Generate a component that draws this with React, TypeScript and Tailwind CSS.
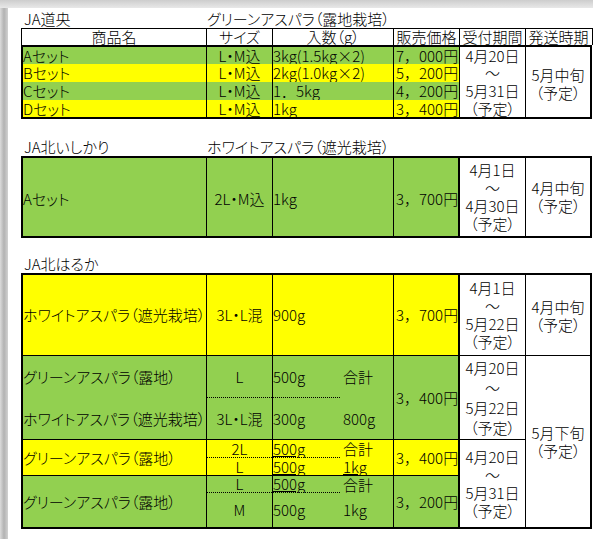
import React from "react";

const G = "bg-[#92d050]";
const Y = "bg-[#ffff00]";

type P = { cls?: string; children?: React.ReactNode };

function W({ children }: { children: React.ReactNode }) {
  return <span className="[font-feature-settings:normal]">{children}</span>;
}

function Cell({ cls = "", children }: P) {
  return <div className={`flex items-center whitespace-nowrap min-w-0 leading-[16px] ${cls}`}>{children}</div>;
}

function Lines({ items, h }: { items: React.ReactNode[]; h: string }) {
  return (
    <div className="flex flex-col items-center">
      {items.map((t, i) => (
        <div key={i} className={`${h} flex items-center justify-center leading-[16px] whitespace-nowrap`}>
          {t}
        </div>
      ))}
    </div>
  );
}

function Title({ a, b }: { a: string; b: string }) {
  return (
    <div className="flex h-[20px] items-end leading-[18px]">
      <div className="w-[186px] pl-[3px]">{a}</div>
      <div>{b}</div>
    </div>
  );
}

function SizeCell({ cls, text, dotted }: { cls: string; text: string; dotted?: boolean }) {
  return (
    <div className={`flex flex-col border-r border-black leading-[16px] ${cls}`}>
      <div className="flex-1 flex items-center justify-center">{text}</div>
      {dotted && <div className="border-b border-dotted border-black" />}
    </div>
  );
}

function QtyCell({
  cls,
  a,
  b,
  dotted,
  ua,
  ub,
}: {
  cls: string;
  a: React.ReactNode;
  b?: React.ReactNode;
  dotted?: boolean;
  ua?: boolean;
  ub?: boolean;
}) {
  return (
    <div className={`flex border-r border-black whitespace-nowrap leading-[16px] ${cls}`}>
      <div className="w-[67px] flex flex-col">
        <div className="flex-1 flex items-center">
          <span className={ua ? "underline underline-offset-[1px]" : ""}>{a}</span>
        </div>
        {dotted && <div className="border-b border-dotted border-black" />}
      </div>
      <div className="flex-1 flex items-center pl-[3px]">
        <span className={ub ? "underline underline-offset-[1px]" : ""}>{b}</span>
      </div>
    </div>
  );
}

function Price({ a, b }: { a: string; b: string }) {
  return (
    <>
      {a}
      <W>，</W>
      {b}円
    </>
  );
}

export default function App() {
  return (
    <div className="w-[593px] h-[539px] bg-white flex flex-col overflow-hidden text-[15px] font-light leading-[18px] text-black font-['Noto_Sans_CJK_JP',sans-serif] [font-feature-settings:'palt']">
      <div className="h-[8px] shrink-0 bg-gradient-to-b from-[#cdcdcd] to-[#e8e8e8]" />
      <div className="flex flex-1">
        <div className="w-[8px] shrink-0 bg-gradient-to-r from-[#dcdcdc] via-[#b2b2b2] to-[#d2d2d2]" />
        <div className="flex-1 pl-[13px] flex flex-col">
          {/* Table 1 */}
          <Title a="JA道央" b="グリーンアスパラ（露地栽培）" />
          <div className="grid grid-cols-[185px_66px_121px_66px_66px_65px] h-[17px] border-t border-l border-r border-black leading-[16px]">
            <div className="border-r border-black text-center">商品名</div>
            <div className="border-r border-black text-center">サイズ</div>
            <div className="border-r border-black text-center">入数（g）</div>
            <div className="border-r border-black text-center whitespace-nowrap">販売価格</div>
            <div className="border-r border-black text-center whitespace-nowrap">受付期間</div>
            <div className="text-center whitespace-nowrap">発送時期</div>
          </div>
          <div className="grid grid-cols-[184px_66px_121px_66px_66px_64px] grid-rows-[17px_18px_18px_17px] border-2 border-black w-[571px]">
            <Cell cls={`${G} border-r border-black`}>Aセット</Cell>
            <Cell cls={`${G} border-r border-black justify-center`}>L・M込</Cell>
            <Cell cls={`${G} border-r border-black`}>3kg(1.5kg×2)</Cell>
            <Cell cls={`${G} border-r border-black pl-[2px]`}>
              <Price a="7" b="000" />
            </Cell>
            <div className="row-span-4 border-r border-black bg-white flex flex-col items-center leading-[16px]">
              <div className="h-[17px] flex items-center">4月20日</div>
              <div className="h-[18px] flex items-center">～</div>
              <div className="h-[18px] flex items-center">5月31日</div>
              <div className="h-[17px] flex items-center">（予定）</div>
            </div>
            <div className="row-span-4 bg-white flex items-center justify-center pt-[3px]">
              <Lines items={["5月中旬", "（予定）"]} h="h-[18px]" />
            </div>

            <Cell cls={`${Y} border-r border-black`}>Bセット</Cell>
            <Cell cls={`${Y} border-r border-black justify-center`}>L・M込</Cell>
            <Cell cls={`${Y} border-r border-black`}>2kg(1.0kg×2)</Cell>
            <Cell cls={`${Y} border-r border-black pl-[2px]`}>
              <Price a="5" b="200" />
            </Cell>

            <Cell cls={`${G} border-r border-black`}>Cセット</Cell>
            <Cell cls={`${G} border-r border-black justify-center`}>L・M込</Cell>
            <Cell cls={`${G} border-r border-black`}>
              1<W>．</W>5kg
            </Cell>
            <Cell cls={`${G} border-r border-black pl-[2px]`}>
              <Price a="4" b="200" />
            </Cell>

            <Cell cls={`${Y} border-r border-black`}>Dセット</Cell>
            <Cell cls={`${Y} border-r border-black justify-center`}>L・M込</Cell>
            <Cell cls={`${Y} border-r border-black`}>1kg</Cell>
            <Cell cls={`${Y} border-r border-black pl-[2px]`}>
              <Price a="3" b="400" />
            </Cell>
          </div>

          {/* Table 2 */}
          <div className="h-[17px] shrink-0" />
          <Title a="JA北いしかり" b="ホワイトアスパラ（遮光栽培）" />
          <div className="grid grid-cols-[184px_66px_121px_66px_66px_64px] h-[82px] border-2 border-black w-[571px]">
            <Cell cls={`${G} border-r border-black pt-[3px]`}>Aセット</Cell>
            <Cell cls={`${G} border-r border-black justify-center pt-[3px]`}>2L・M込</Cell>
            <Cell cls={`${G} border-r border-black pt-[3px]`}>1kg</Cell>
            <Cell cls={`${G} border-r-2 border-black pl-[2px] pt-[3px]`}>
              <Price a="3" b="700" />
            </Cell>
            <div className="border-r border-black bg-white flex items-center justify-center">
              <Lines items={["4月1日", "～", "4月30日", "（予定）"]} h="h-[18px]" />
            </div>
            <div className="bg-white flex items-center justify-center">
              <Lines items={["4月中旬", "（予定）"]} h="h-[18px]" />
            </div>
          </div>

          {/* Table 3 */}
          <div className="h-[15px] shrink-0" />
          <Title a="JA北はるか" b="" />
          <div className="grid grid-cols-[184px_66px_121px_66px_66px_64px] grid-rows-[81px_42px_42px_18px_18px_17px_34px] border-2 border-black w-[571px]">
            {/* col 1 */}
            <Cell cls={`${Y} col-start-1 row-start-1 border-r border-b border-black`}>ホワイトアスパラ（遮光栽培）</Cell>
            <Cell cls={`${G} col-start-1 row-start-2 border-r border-black`}>グリーンアスパラ（露地）</Cell>
            <Cell cls={`${G} col-start-1 row-start-3 border-r border-b border-black`}>ホワイトアスパラ（遮光栽培）</Cell>
            <Cell cls={`${Y} col-start-1 row-start-4 row-span-2 border-r border-b border-black`}>グリーンアスパラ（露地）</Cell>
            <Cell cls={`${G} col-start-1 row-start-6 row-span-2 border-r border-black`}>グリーンアスパラ（露地）</Cell>

            {/* col 2 */}
            <SizeCell cls={`${Y} col-start-2 row-start-1 border-b`} text="3L・L混" />
            <SizeCell cls={`${G} col-start-2 row-start-2`} text="L" dotted />
            <SizeCell cls={`${G} col-start-2 row-start-3 border-b`} text="3L・L混" />
            <SizeCell cls={`${Y} col-start-2 row-start-4`} text="2L" dotted />
            <SizeCell cls={`${Y} col-start-2 row-start-5 border-b`} text="L" />
            <SizeCell cls={`${G} col-start-2 row-start-6`} text="L" dotted />
            <SizeCell cls={`${G} col-start-2 row-start-7`} text="M" />

            {/* col 3 */}
            <QtyCell cls={`${Y} col-start-3 row-start-1 border-b`} a="900g" />
            <QtyCell cls={`${G} col-start-3 row-start-2`} a="500g" b="合計" dotted />
            <QtyCell cls={`${G} col-start-3 row-start-3 border-b`} a="300g" b="800g" />
            <QtyCell cls={`${Y} col-start-3 row-start-4`} a="500g" b="合計" dotted ua />
            <QtyCell cls={`${Y} col-start-3 row-start-5 border-b`} a="500g" b="1kg" ua ub />
            <QtyCell cls={`${G} col-start-3 row-start-6`} a="500g" b="合計" dotted ua />
            <QtyCell cls={`${G} col-start-3 row-start-7`} a="500g" b="1kg" />

            {/* col 4 */}
            <Cell cls={`${Y} col-start-4 row-start-1 border-r-2 border-b border-black pl-[2px]`}>
              <Price a="3" b="700" />
            </Cell>
            <Cell cls={`${G} col-start-4 row-start-2 row-span-2 border-r-2 border-b border-black pl-[2px]`}>
              <Price a="3" b="400" />
            </Cell>
            <Cell cls={`${Y} col-start-4 row-start-4 row-span-2 border-r-2 border-b border-black pl-[2px]`}>
              <Price a="3" b="400" />
            </Cell>
            <Cell cls={`${G} col-start-4 row-start-6 row-span-2 border-r-2 border-black pl-[2px]`}>
              <Price a="3" b="200" />
            </Cell>

            {/* col 5 */}
            <div className="col-start-5 row-start-1 border-r border-b border-black bg-white flex items-center justify-center">
              <Lines items={["4月1日", "～", "5月22日", "（予定）"]} h="h-[18px]" />
            </div>
            <div className="col-start-5 row-start-2 row-span-2 border-r border-b border-black bg-white flex items-center justify-center">
              <Lines items={["4月20日", "～", "5月22日", "（予定）"]} h="h-[20px]" />
            </div>
            <div className="col-start-5 row-start-4 row-span-4 border-r border-black bg-white flex items-center justify-center">
              <Lines items={["4月20日", "～", "5月31日", "（予定）"]} h="h-[18px]" />
            </div>

            {/* col 6 */}
            <div className="col-start-6 row-start-1 border-b border-black bg-white flex items-center justify-center pt-[2px]">
              <Lines items={["4月中旬", "（予定）"]} h="h-[18px]" />
            </div>
            <div className="col-start-6 row-start-2 row-span-6 bg-white flex items-center justify-center">
              <Lines items={["5月下旬", "（予定）"]} h="h-[18px]" />
            </div>
          </div>
        </div>
      </div>
    </div>
  );
}
